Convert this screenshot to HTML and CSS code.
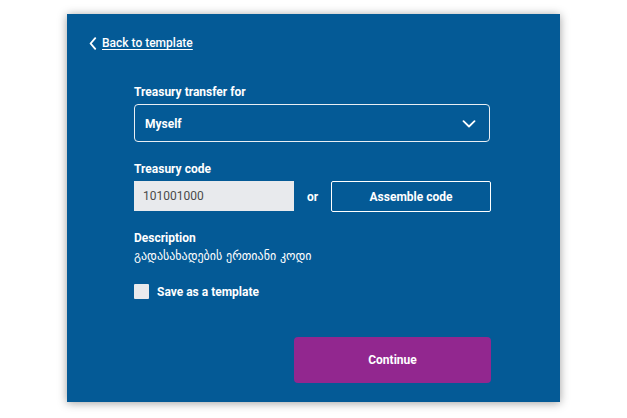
FILE: index.html
```html
<!DOCTYPE html>
<html lang="en">
<head>
<meta charset="utf-8">
<title>Treasury transfer</title>
<link rel="stylesheet" href="styles.css">
</head>
<body>
<div class="panel">
  <a class="back" href="#">
    <svg class="back-icon" width="8" height="13" viewBox="0 0 8 13"><path d="M6.2 1.2 L1.6 6.5 L6.2 11.8" fill="none" stroke="#fff" stroke-width="1.9" stroke-linecap="round" stroke-linejoin="round"/></svg>
    <span class="back-text">Back to template</span>
  </a>
  <form class="form">
    <div class="label first">Treasury transfer for</div>
    <div class="select">
      <span>Myself</span>
      <svg width="14" height="8" viewBox="0 0 14 8"><path d="M1.5 1.2 L7 6.5 L12.5 1.2" fill="none" stroke="#fff" stroke-width="1.8" stroke-linecap="round" stroke-linejoin="round"/></svg>
    </div>
    <div class="label">Treasury code</div>
    <div class="code-row">
      <div class="input">101001000</div>
      <span class="or">or</span>
      <button type="button" class="outline-btn">Assemble code</button>
    </div>
    <div class="label desc-label">Description</div>
    <div class="desc">გადასახადების ერთიანი კოდი</div>
    <label class="check-row"><span class="checkbox"></span><span>Save as a template</span></label>
    <button type="button" class="continue">Continue</button>
  </form>
</div>
</body>
</html>
```
FILE: styles.css
```css
html, body {
  margin: 0;
  padding: 0;
  background: #ffffff;
}
body {
  font-family: Roboto, "DejaVu Sans", sans-serif;
  color: #ffffff;
  padding: 14px 0 0 67px;
  height: 418px;
  box-sizing: border-box;
  overflow: hidden;
}
.panel {
  width: 493px;
  height: 388px;
  background: #045a96;
  box-shadow: 0 1px 9px rgba(0, 0, 0, 0.38);
  display: flex;
  flex-direction: column;
  padding-top: 21px;
  box-sizing: border-box;
}
.back {
  display: flex;
  align-items: center;
  gap: 5px;
  margin-left: 22px;
  height: 16px;
  color: #fff;
  text-decoration: none;
  font-size: 12px;
  font-weight: 500;
}
.back-text {
  text-decoration: underline;
  text-underline-offset: 2px;
}
.form {
  margin: 0 0 0 67px;
  width: 357px;
  display: flex;
  flex-direction: column;
}
.label {
  font-size: 12px;
  font-weight: 700;
  line-height: 16px;
  margin-top: 19px;
  margin-bottom: 4px;
}
.label.first {
  margin-top: 33px;
}
.select {
  height: 38px;
  box-sizing: border-box;
  border: 1.5px solid #e8eef4;
  border-radius: 4px;
  display: flex;
  align-items: center;
  justify-content: space-between;
  padding: 2px 13px 0 10px;
  font-size: 12px;
  font-weight: 700;
  width: 356px;
}
.code-row {
  display: flex;
  align-items: center;
  height: 31px;
}
.input {
  width: 160px;
  height: 30px;
  box-sizing: border-box;
  background: #e8eaed;
  color: #4a4a4a;
  font-size: 12px;
  padding-left: 9px;
  display: flex;
  align-items: center;
  align-self: flex-start;
}
.or {
  width: 37px;
  text-align: center;
  font-size: 12px;
  font-weight: 700;
}
.outline-btn {
  width: 160px;
  height: 31px;
  background: transparent;
  border: 1.5px solid #fff;
  border-radius: 2px;
  color: #fff;
  font-family: inherit;
  font-size: 12px;
  font-weight: 700;
  padding: 0;
}
.desc-label {
  margin-top: 18px;
  margin-bottom: 2px;
}
.desc {
  font-family: "DejaVu Sans", sans-serif;
  font-size: 12px;
  line-height: 16px;
}
.check-row {
  display: flex;
  align-items: center;
  gap: 8px;
  margin-top: 19px;
  font-size: 12px;
  font-weight: 700;
  height: 17px;
}
.checkbox {
  width: 15px;
  height: 15px;
  background: #e8eaed;
  border-radius: 1px;
}
.continue {
  align-self: flex-end;
  margin-top: 37px;
  width: 197px;
  height: 46px;
  background: #92278f;
  border: none;
  border-radius: 4px;
  color: #fff;
  font-family: inherit;
  font-size: 12px;
  font-weight: 700;
}
```
